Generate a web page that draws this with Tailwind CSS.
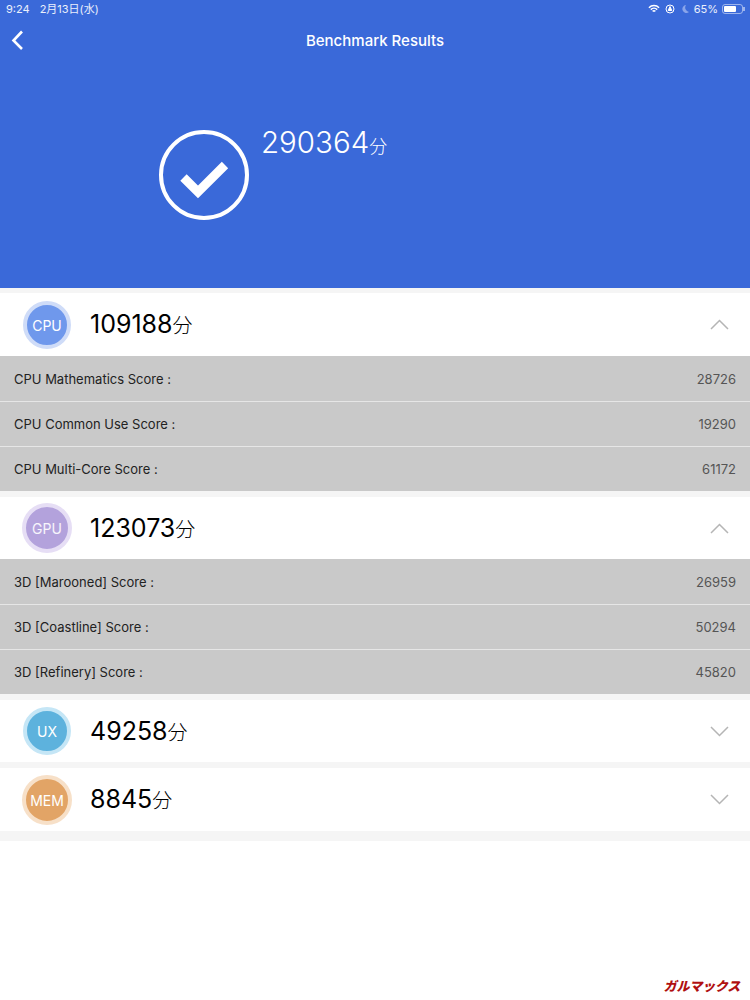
<!DOCTYPE html>
<html lang="ja">
<head>
  <meta charset="UTF-8"/>
  <title>Benchmark Results</title>
  <script src="https://cdn.jsdelivr.net/npm/@tailwindcss/browser@4"></script>
</head>
<body class="w-[750px] h-[1000px] overflow-hidden bg-white text-black font-['Inter','Noto_Sans_CJK_JP',sans-serif]">

<!-- header -->
<header class="h-[288px] bg-[#3a69d9] text-white">
  <div class="h-[18px] pl-[6px] pr-[5px] flex items-center justify-between text-[11px] text-white/90">
    <div class="flex gap-[10px]"><span>9:24</span><span>2月13日(水)</span></div>
    <div class="flex items-center">
      <svg class="mr-[5px]" width="12" height="10" viewBox="0 0 13 10" fill="none" stroke="white" stroke-width="1.6"><path d="M1 3.6a7.8 7.8 0 0 1 11 0M3 5.7a5 5 0 0 1 7 0M5 7.6a2.2 2.2 0 0 1 3 0"/></svg>
      <svg class="mr-[6px]" width="10" height="10" viewBox="0 0 10 10" fill="none" stroke="white" stroke-width="1"><circle cx="5" cy="5" r="4"/><path d="M5 2.5 3.2 6.5h3.6z" fill="white"/></svg>
      <svg class="mr-[5px]" width="8" height="10" viewBox="0 0 8 10"><path d="M5 1a4 4 0 1 0 3 7A4.5 4.5 0 0 1 5 1z" fill="#8aa5ea"/></svg>
      <span class="mr-[4px]">65%</span>
      <div class="flex items-center">
        <div class="w-[21px] h-[10px] rounded-[3px] border border-white/50 p-[1px]"><div class="w-[12px] h-full bg-white rounded-[1px]"></div></div>
        <div class="w-[2px] h-[4px] bg-white/50"></div>
      </div>
    </div>
  </div>
  <div class="relative h-[46px] flex items-center justify-center">
    <svg class="absolute left-[11px] top-[12px]" width="13" height="20" viewBox="0 0 13 20" fill="none" stroke="white" stroke-width="2.6"><path d="M11 1.5 2.5 10.5 11 19"/></svg>
    <span class="text-[15px] font-medium">Benchmark Results</span>
  </div>
  <div class="pl-[159px] pt-[66px] flex">
    <svg width="90" height="90" viewBox="0 0 90 90" fill="none" stroke="white">
      <circle cx="45" cy="45" r="43" stroke-width="4"/>
      <path d="M24.500 47.500 39 62 66 35" stroke-width="9"/>
    </svg>
    <div class="ml-[12px] -mt-[10px] h-[40px] flex items-baseline text-[29.5px] font-light">290364<span class="text-[18px]">分</span></div>
  </div>
</header>

<div class="h-[5px] bg-[#f5f5f5]"></div>

<!-- CPU -->
<div class="h-[63px] bg-white flex items-center pl-[23px] pr-[21px]">
  <div class="w-[48px] h-[48px] pt-[1px] rounded-full border-[4px] border-[#cfdcf8] bg-[#6f98ec] flex items-center justify-center text-white text-[14px]">CPU</div>
  <div class="ml-[19px] mt-[1px] text-[25px] flex items-baseline">109188<span class="text-[20px] font-light">分</span></div>
  <svg class="ml-auto" width="19" height="11" viewBox="0 0 19 11" fill="none" stroke="#b5b5b5" stroke-width="1.5"><path d="M1 10 9.5 1.5 18 10"/></svg>
</div>
<div class="bg-[#c9c9c9] text-[13px] text-[#222]">
  <div class="h-[46px] pt-[2px] flex items-center justify-between px-[14px] border-b border-[#e6e6e6]"><span>CPU Mathematics Score :</span><span class="text-[#555]">28726</span></div>
  <div class="h-[45px] pt-[2px] flex items-center justify-between px-[14px] border-b border-[#e6e6e6]"><span>CPU Common Use Score :</span><span class="text-[#555]">19290</span></div>
  <div class="h-[44px] pt-[2px] flex items-center justify-between px-[14px]"><span>CPU Multi-Core Score :</span><span class="text-[#555]">61172</span></div>
</div>

<div class="h-[6px] bg-[#f5f5f5]"></div>

<!-- GPU -->
<div class="h-[62px] bg-white flex items-center pl-[22px] pr-[21px]">
  <div class="w-[50px] h-[50px] pt-[1px] rounded-full border-[4px] border-[#e6def5] bg-[#b3a2dc] flex items-center justify-center text-white/90 text-[14px]">GPU</div>
  <div class="ml-[18px] mt-[1px] text-[25px] flex items-baseline">123073<span class="text-[20px] font-light">分</span></div>
  <svg class="ml-auto" width="19" height="11" viewBox="0 0 19 11" fill="none" stroke="#b5b5b5" stroke-width="1.5"><path d="M1 10 9.5 1.5 18 10"/></svg>
</div>
<div class="bg-[#c9c9c9] text-[13px] text-[#222]">
  <div class="h-[46px] pt-[2px] flex items-center justify-between px-[14px] border-b border-[#e6e6e6]"><span>3D [Marooned] Score :</span><span class="text-[#555]">26959</span></div>
  <div class="h-[45px] pt-[2px] flex items-center justify-between px-[14px] border-b border-[#e6e6e6]"><span>3D [Coastline] Score :</span><span class="text-[#555]">50294</span></div>
  <div class="h-[44px] pt-[2px] flex items-center justify-between px-[14px]"><span>3D [Refinery] Score :</span><span class="text-[#555]">45820</span></div>
</div>

<div class="h-[6px] bg-[#f5f5f5]"></div>

<!-- UX -->
<div class="h-[62px] bg-white flex items-center pl-[23px] pr-[21px]">
  <div class="w-[48px] h-[48px] pt-[1px] rounded-full border-[4px] border-[#c5e6f6] bg-[#5db2dd] flex items-center justify-center text-white text-[14px]">UX</div>
  <div class="ml-[19px] mt-[1px] text-[25px] flex items-baseline">49258<span class="text-[20px] font-light">分</span></div>
  <svg class="ml-auto" width="19" height="11" viewBox="0 0 19 11" fill="none" stroke="#b5b5b5" stroke-width="1.5"><path d="M1 1 9.5 9.5 18 1"/></svg>
</div>

<div class="h-[6px] bg-[#f5f5f5]"></div>

<!-- MEM -->
<div class="h-[63px] bg-white flex items-center pl-[22px] pr-[21px]">
  <div class="w-[50px] h-[50px] pt-[1px] rounded-full border-[4px] border-[#f7e0c8] bg-[#e2a466] flex items-center justify-center text-white text-[14px]">MEM</div>
  <div class="ml-[18px] mt-[1px] text-[25px] flex items-baseline">8845<span class="text-[20px] font-light">分</span></div>
  <svg class="ml-auto" width="19" height="11" viewBox="0 0 19 11" fill="none" stroke="#b5b5b5" stroke-width="1.5"><path d="M1 1 9.5 9.5 18 1"/></svg>
</div>

<div class="h-[10px] bg-[#f5f5f5]"></div>

<!-- watermark -->
<div class="absolute right-[10px] top-[979px] text-[13px] leading-[14px] font-black italic text-[#b01010] tracking-[-0.2px]">ガルマックス</div>

</body>
</html>
